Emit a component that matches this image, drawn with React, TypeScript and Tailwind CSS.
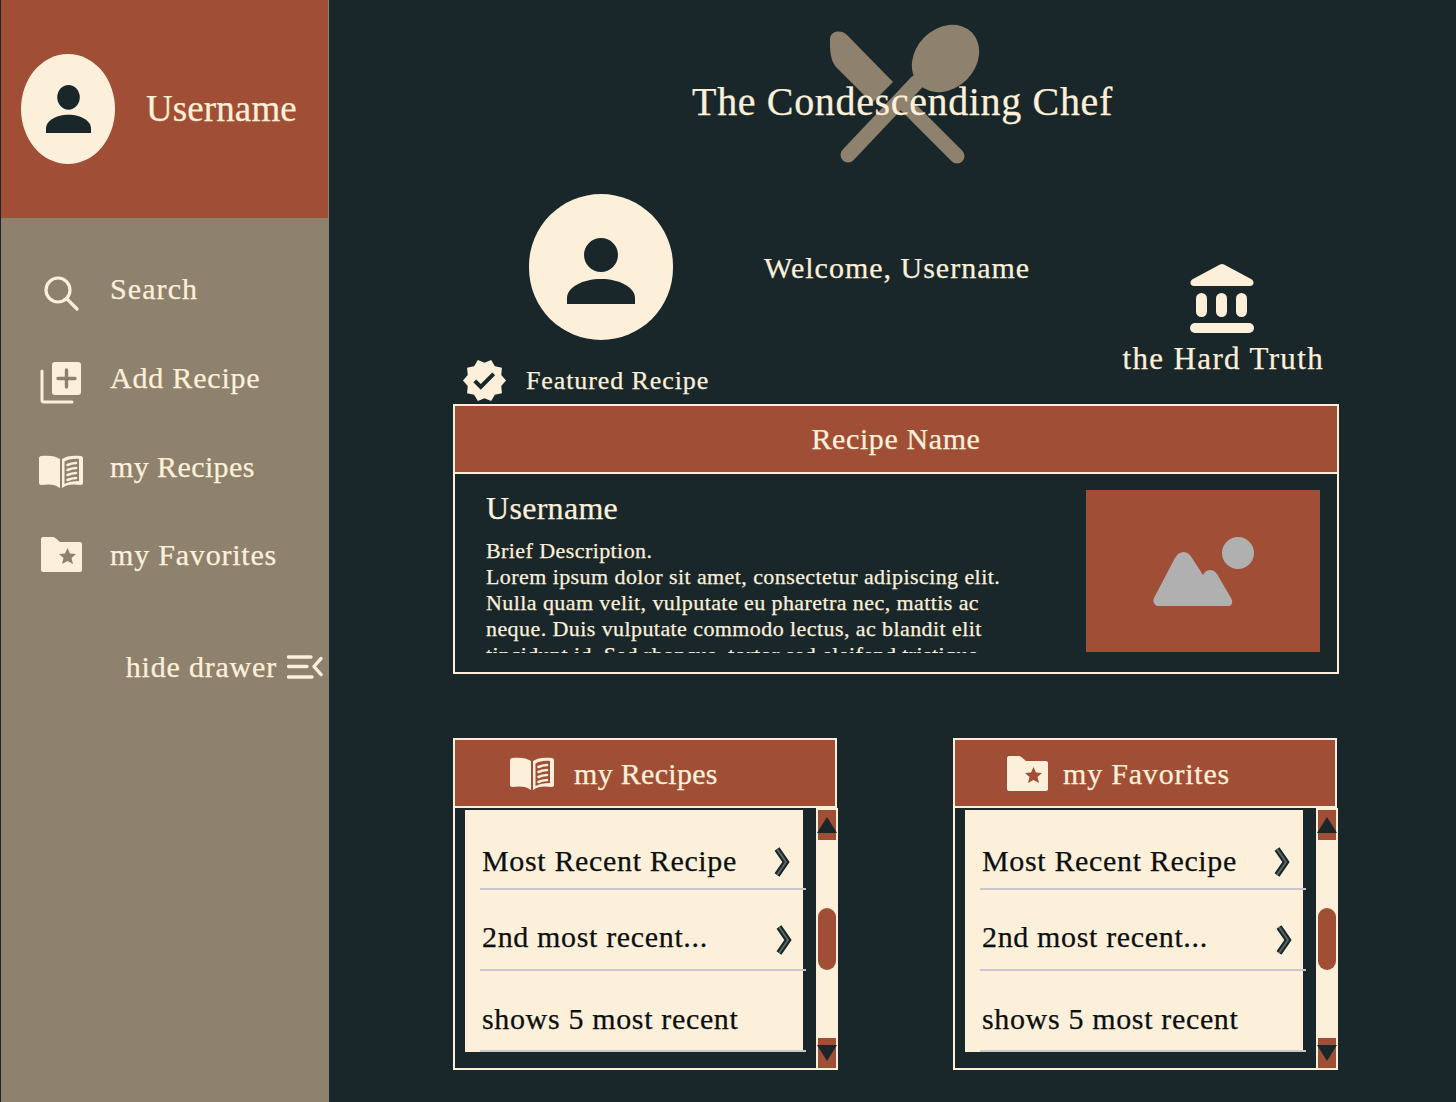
import { MdVerified } from 'react-icons/md';

const serif = { fontFamily: '"Liberation Serif", serif' };

function PersonIcon({ className }: { className?: string }) {
  return (
    <svg viewBox="0 0 68 66" className={className} fill="#19272b" preserveAspectRatio="none">
      <circle cx="34" cy="17" r="17" />
      <path d="M0 66 V60 C0 49 16 41 34 41 C52 41 68 49 68 60 V66 Z" />
    </svg>
  );
}

function SearchIcon() {
  return (
    <svg viewBox="0 0 36 36" className="h-9 w-9" fill="none" stroke="#fdf0da" strokeWidth="3.2" strokeLinecap="round">
      <circle cx="15" cy="15" r="12" />
      <path d="M24 24 L34 34" />
    </svg>
  );
}

function AddIcon() {
  return (
    <svg viewBox="0 0 42 42" className="h-[42px] w-[42px]">
      <path d="M2 9 V38 a2 2 0 0 0 2 2 H32" fill="none" stroke="#fdf0da" strokeWidth="3" strokeLinecap="round" />
      <rect x="12" y="0" width="29" height="33" rx="3" fill="#fdf0da" />
      <path d="M26.5 8 V25 M18 16.5 H35" stroke="#8e816d" strokeWidth="3.4" strokeLinecap="round" />
    </svg>
  );
}

function BookIcon({ bg, className }: { bg: string; className?: string }) {
  return (
    <svg viewBox="0 0 44 33" className={className}>
      <path d="M21 4 C17 1 10 0 2 1 C1 1 0 2 0 3 V28 C0 29 1 30 2 30 C10 29 16 29 21 33 Z" fill="#fdf0da" />
      <path d="M23 4 C27 1 34 0 42 1 C43 1 44 2 44 3 V28 C44 29 43 30 42 30 C34 29 28 29 23 33 Z" fill="#fdf0da" />
      <path d="M25.500 6.500 C29 4.500 34 3.500 40 4 V26 C34 26 29 27 25.500 29 Z" fill={bg} />
      <path d="M28.500 10 C31 8.800 33.500 8.200 37 8 M28.500 15 C31 13.800 33.500 13.200 37 13 M28.500 20 C31 18.800 33.500 18.200 37 18 M28.500 25 C31 23.800 33.500 23.200 37 23" fill="none" stroke="#fdf0da" strokeWidth="2.6" strokeLinecap="round" />
    </svg>
  );
}

function FolderIcon({ bg, className }: { bg: string; className?: string }) {
  return (
    <svg viewBox="0 0 41 35" className={className}>
      <path d="M2 0 H12 C13 0 14 0.500 15 1.500 L19 5 H39 C40 5 41 6 41 7 V33 C41 34 40 35 39 35 H2 C1 35 0 34 0 33 V2 C0 1 1 0 2 0 Z" fill="#fdf0da" />
      <path d="M26.500 11 L29 16.500 L35 17 L30.500 21 L32 27 L26.500 24 L21 27 L22.500 21 L18 17 L24 16.500 Z" fill={bg} />
    </svg>
  );
}

function BankIcon() {
  return (
    <svg viewBox="0 0 64 70" className="h-[70px] w-16" fill="#fdf0da">
      <path d="M30 .6 a4 4 0 0 1 4 0 L61 15 C65 17 64 22 60 22 H4 C0 22 -1 17 3 15 Z" />
      <rect x="6" y="29" width="11" height="24" rx="5.5" />
      <rect x="26" y="29" width="11" height="24" rx="5.5" />
      <rect x="46" y="29" width="11" height="24" rx="5.5" />
      <rect x="0" y="59" width="64" height="10" rx="5" />
    </svg>
  );
}

function MenuOpenIcon() {
  return (
    <svg viewBox="0 0 36 24" className="h-6 w-9" fill="none" stroke="#fdf0da" strokeWidth="3.4" strokeLinecap="round" strokeLinejoin="round">
      <path d="M1.500 2 H24 M1.500 11.500 H20 M1.500 22 H25 M34 3.500 L27 11.500 L34 19.500" />
    </svg>
  );
}

function LogoIcon() {
  return (
    <svg viewBox="0 0 152 142" className="h-[142px] w-[152px]" fill="#8e816d">
      <path d="M18 12 L64 59 L43 80 L8 45 C3 40 1 32 1 22 V16 C1 8 12 6 18 12 Z" />
      <path d="M72 77 L128 133" stroke="#8e816d" strokeWidth="15" strokeLinecap="round" />
      <path d="M88 59 L19 132" stroke="#8e816d" strokeWidth="15" strokeLinecap="round" />
      <ellipse cx="116.500" cy="35.500" rx="37" ry="30" transform="rotate(-45 116.500 35.500)" />
    </svg>
  );
}

function ImageIcon() {
  return (
    <svg viewBox="0 0 102 70" className="h-[70px] w-[102px]" fill="#b0b0b0">
      <circle cx="85" cy="17" r="16" />
      <path d="M22 22 C26 14 35 14 39 22 L50 39 C53 33 60 32 64 38 L78 62 C81 67 78 71 73 71 H9 C2 71 -2 66 2 60 Z" />
    </svg>
  );
}

function Chevron({ className }: { className?: string }) {
  return (
    <svg viewBox="0 0 16 30" className={`h-[30px] w-4 ${className ?? ''}`} fill="none">
      <path d="M3 2 L12 15 L3 28" stroke="#19272b" strokeWidth="6" />
      <path d="M3 2 L12 15 L3 28" stroke="#5d6b68" strokeWidth="1.8" />
    </svg>
  );
}

const navItems = [
  { label: 'Search', icon: <SearchIcon />, row: 'h-[89px] tracking-[1.1px]', box: 'pt-[8px]' },
  { label: 'Add Recipe', icon: <AddIcon />, row: 'h-[89px] tracking-[0.8px]', box: 'pt-[10px]' },
  { label: 'my Recipes', icon: <BookIcon bg="#8e816d" className="h-[33px] w-11" />, row: 'h-[89px] tracking-[0.4px]', box: 'pt-[10px]' },
  { label: 'my Favorites', icon: <FolderIcon bg="#8e816d" className="h-[35px] w-[41px]" />, row: 'h-[87px] tracking-[0.8px]', box: 'pt-0' },
];

function ListCard({ title, icon, headClass }: { title: string; icon: React.ReactNode; headClass: string }) {
  return (
    <div className="flex w-[385px] flex-col">
      <div className={`flex h-[70px] w-[384px] items-center border-2 border-[#fdf0da] bg-[#a04f36] text-[30px] text-[#fdf0da] ${headClass}`}>
        {icon}
        <span>{title}</span>
      </div>
      <div className="flex h-[262px] border-x-2 border-b-2 border-[#fdf0da] bg-[#19272b]">
        <div className="ml-[10px] mt-[2px] h-[242px] w-[338px] bg-[#fdf0da] text-[30px] tracking-[0.65px] text-[#0c0f10]">
          <div className="-mr-[3px] ml-[15px] flex h-[80px] items-center justify-between border-b-2 border-[#c9c6cc] pr-[16px] pt-[23px]">
            <span className="ml-[2px]">Most Recent Recipe</span>
            <Chevron className="mt-[2px]" />
          </div>
          <div className="-mr-[3px] ml-[15px] flex h-[81px] items-center justify-between border-b-2 border-[#c9c6cc] pr-[14px] pt-[14px]">
            <span className="ml-[2px]">2nd most recent...</span>
            <Chevron className="mt-[6px]" />
          </div>
          <div className="-mr-[3px] ml-[15px] flex h-[81px] items-center border-b-2 border-[#c9c6cc] pt-[16px]">
            <span className="ml-[2px]">shows 5 most recent</span>
          </div>
        </div>
        <div className="ml-auto flex w-5 flex-col justify-between border-t-2 border-[#fdf0da] bg-[#fdf0da] pl-[2px]">
          <div className="flex h-[30px] flex-col items-center bg-[#a04f36]">
            <div className="mt-[7px] h-4 w-5 shrink-0 bg-[#19272b] [clip-path:polygon(50%_0,100%_100%,0_100%)]" />
          </div>
          <div className="h-[62px] rounded-[10px] bg-[#a04f36]" />
          <div className="flex h-[30px] flex-col items-center bg-[#a04f36]">
            <div className="mt-[7px] h-4 w-5 shrink-0 bg-[#19272b] [clip-path:polygon(0_0,100%_0,50%_100%)]" />
          </div>
        </div>
      </div>
    </div>
  );
}

export default function App() {
  return (
    <div style={serif} className="flex h-[1102px] w-[1456px] overflow-hidden bg-[#19272b] pl-px text-[#fdf0da] [-webkit-text-stroke:0.25px]">
      <aside className="flex w-[328px] shrink-0 flex-col bg-[#8e816d]">
        <div className="mr-px flex h-[218px] items-center bg-[#a04f36] pl-5">
          <div className="flex h-[110px] w-[94px] items-center justify-center rounded-[50%] bg-[#fdf0da]">
            <PersonIcon className="h-[48px] w-[45px]" />
          </div>
          <span className="ml-[31px] text-[37px] tracking-[0.1px]">Username</span>
        </div>
        <nav className="flex flex-col pt-[26px]">
          {navItems.map((item) => (
            <div key={item.label} className={`flex items-center text-[30px] ${item.row}`}>
              <div className={`ml-[30px] mr-[19px] flex w-[60px] justify-center ${item.box}`}>{item.icon}</div>
              <span>{item.label}</span>
            </div>
          ))}
        </nav>
        <div className="mt-[46px] flex items-center justify-end gap-[10px] pr-[6px] text-[30px] tracking-[0.8px]">
          <span>hide drawer</span>
          <MenuOpenIcon />
        </div>
      </aside>

      <main className="flex flex-1 flex-col pl-[124px]">
        <header className="relative flex h-[194px] w-[886px] justify-center pl-[13px] pt-[77px]">
          <div className="absolute left-[376px] top-[23px]">
            <LogoIcon />
          </div>
          <h1 className="relative text-[40px] leading-[50px] tracking-[0.65px]">The Condescending Chef</h1>
        </header>

        <section className="flex h-[210px] w-[886px]">
          <div className="flex w-[311px] shrink-0 flex-col">
            <div className="ml-[76px] flex h-[146px] w-[144px] items-center justify-center rounded-full bg-[#fdf0da] pt-2">
              <PersonIcon className="h-[66px] w-[68px]" />
            </div>
            <div className="mt-[17px] flex items-center">
              <MdVerified className="ml-[8px] shrink-0 text-[#fdf0da]" size={47} />
              <span className="ml-[18px] text-[26px] tracking-[0.9px]">Featured Recipe</span>
            </div>
          </div>
          <p className="pt-[54px] text-[30px] leading-[40px] tracking-[1px]">Welcome, Username</p>
          <div className="ml-auto mr-[15px] flex flex-col items-center pt-[70px]">
            <div className="pr-[2px]">
              <BankIcon />
            </div>
            <span className="mt-[5px] text-[31px] leading-[40px] tracking-[1.35px]">the Hard Truth</span>
          </div>
        </section>

        <section className="flex h-[270px] w-[886px] flex-col border-2 border-[#fdf0da]">
          <div className="flex h-[68px] shrink-0 items-center justify-center border-b-2 border-[#fdf0da] bg-[#a04f36] pb-[2px] text-[30px] tracking-[0.6px]">
            Recipe Name
          </div>
          <div className="flex flex-1 justify-between pb-5 pl-[31px] pr-[17px] pt-4">
            <div className="-mt-px h-[164px] w-[530px] overflow-hidden">
              <h2 className="text-[32px] leading-[38px] tracking-[0.3px]">Username</h2>
              <p className="mt-[11px] whitespace-nowrap text-[22px] leading-[26px] tracking-[0.42px]">
                Brief Description.
                <br />
                Lorem ipsum dolor sit amet, consectetur adipiscing elit.
                <br />
                Nulla quam velit, vulputate eu pharetra nec, mattis ac
                <br />
                neque. Duis vulputate commodo lectus, ac blandit elit
                <br />
                tincidunt id. Sed rhoncus, tortor sed eleifend tristique
              </p>
            </div>
            <div className="flex h-[162px] w-[234px] items-center justify-center bg-[#a04f36] pl-px">
              <ImageIcon />
            </div>
          </div>
        </section>

        <section className="mt-16 flex w-[886px] justify-between">
          <ListCard title="my Recipes" headClass="gap-[20px] pl-[55px] tracking-[0.3px]" icon={<BookIcon bg="#a04f36" className="h-[33px] w-[44px]" />} />
          <div className="mr-[1px]">
            <ListCard title="my Favorites" headClass="gap-[15px] pl-[52px] tracking-[0.8px]" icon={<FolderIcon bg="#a04f36" className="h-[35px] w-[41px]" />} />
          </div>
        </section>
      </main>
    </div>
  );
}
